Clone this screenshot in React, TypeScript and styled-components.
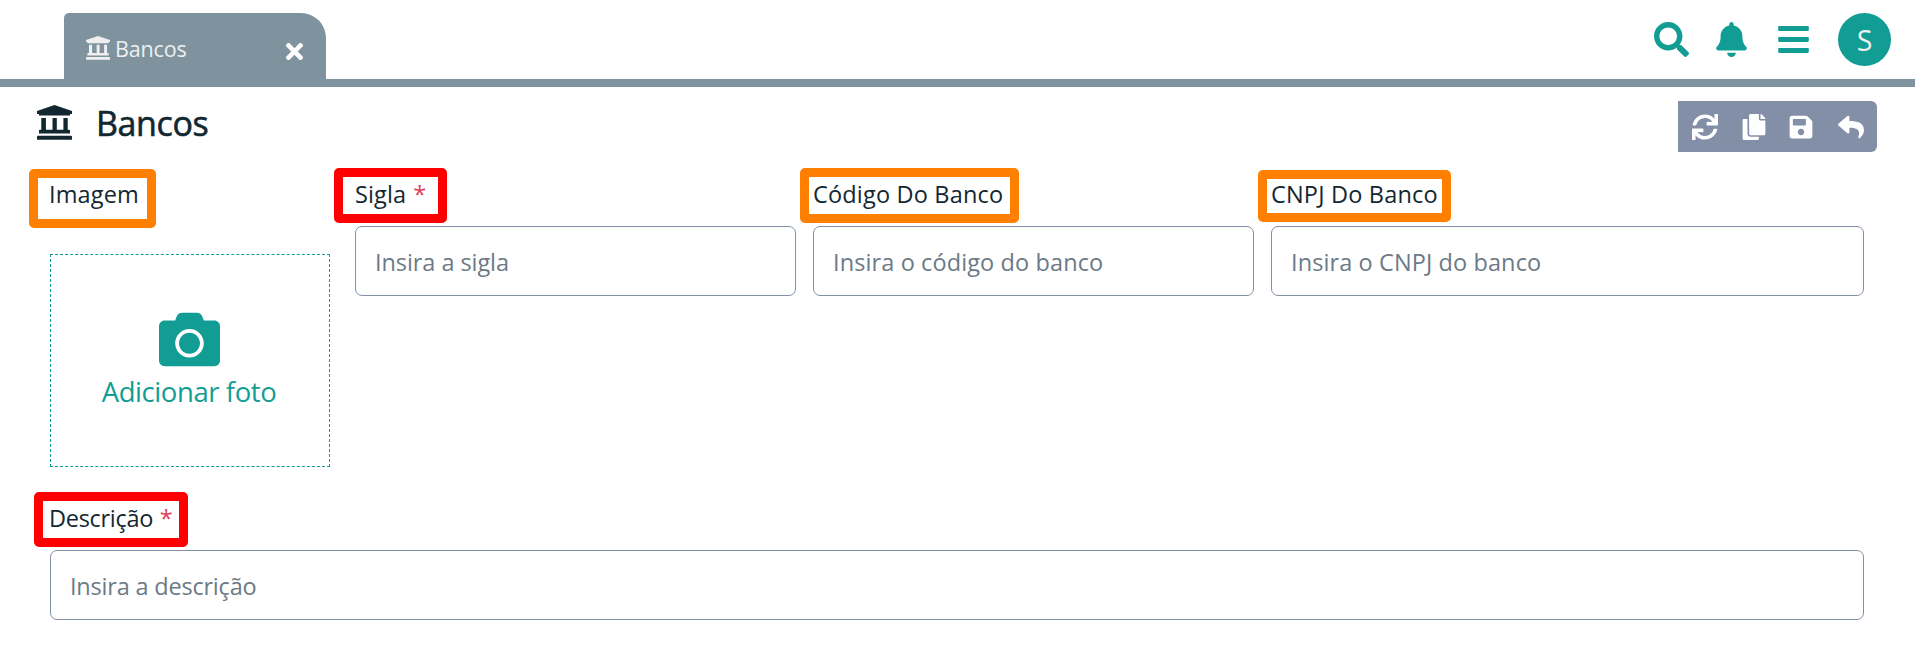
import React from "react";
import styled, { createGlobalStyle, css } from "styled-components";
import {
  FaBars,
  FaBell,
  FaCamera,
  FaCopy,
  FaReply,
  FaSave,
  FaSearch,
  FaSync,
  FaTimes,
} from "react-icons/fa";

const teal = "#129d94";
const slate = "#7e939e";
const ink = "#132731";
const border = "#838fa6";
const orange = "#ff8000";
const red = "#ff0000";

const GlobalStyle = createGlobalStyle`
  * { box-sizing: border-box; }
  body {
    margin: 0;
    background: #fff;
    color: ${ink};
    font-family: "Open Sans", "Noto Sans", sans-serif;
  }
`;

const Page = styled.div`
  display: flex;
  flex-direction: column;
  height: 669px;
  overflow: hidden;
  background: #fff;
`;

const Header = styled.header`
  display: flex;
  justify-content: space-between;
  height: 87px;
  padding: 13px 24px 0 64px;
  border-bottom: 8px solid ${slate};
`;

const Tab = styled.div`
  display: flex;
  align-items: center;
  width: 262px;
  height: 66px;
  padding: 4px 19px 0 22px;
  border-radius: 5px 25px 0 0;
  background: ${slate};
  color: #efefef;
`;

const TabLabel = styled.span`
  flex: 1;
  margin: 1px 0 0 5px;
  font-size: 21.5px;
  line-height: 30px;
  letter-spacing: -0.15px;
`;

const CloseButton = styled.button`
  display: flex;
  padding: 6px 0 0;
  border: 0;
  background: none;
  color: #fff;
`;

const HeaderActions = styled.div`
  display: flex;
  align-items: flex-start;
  color: ${teal};
`;

const HeaderIcon = styled.span<{ $gap: number }>`
  display: flex;
  margin: 9px ${(p) => p.$gap}px 0 0;
`;

const Avatar = styled.div`
  display: flex;
  align-items: center;
  justify-content: center;
  width: 53px;
  height: 53px;
  border-radius: 50%;
  background: ${teal};
  color: #efefef;
  font-size: 28.5px;
  line-height: 40px;
`;

const Main = styled.main`
  display: flex;
  flex-direction: column;
  padding: 14px 38px 0 37px;
`;

const TitleRow = styled.div`
  display: flex;
  align-items: flex-start;
  justify-content: space-between;
  height: 51px;
`;

const Title = styled.h1`
  display: flex;
  align-items: flex-start;
  gap: 24px;
  margin: 0;
  font-size: 34px;
  font-weight: 500;
  line-height: 44px;
  letter-spacing: -0.4px;
  -webkit-text-stroke: 0.6px ${ink};

  svg {
    margin-top: 4px;
  }
`;

const Toolbar = styled.div`
  display: flex;
  align-items: center;
  width: 199px;
  height: 51px;
  padding-left: 14px;
  border-radius: 0 6px 6px 0;
  background: ${border};
`;

const ToolButton = styled.button<{ $width: number }>`
  display: flex;
  flex: none;
  width: ${(p) => p.$width}px;
  padding: 0;
  border: 0;
  background: none;
  color: #fff;
`;

const Form = styled.form`
  display: grid;
  grid-template-columns: 288px 441px 441px 593px;
  column-gap: 17px;
  padding: 24px 0 0 13px;
`;

const Field = styled.div<{ $wide?: boolean }>`
  display: flex;
  flex-direction: column;
  align-items: flex-start;
  ${(p) =>
    p.$wide &&
    css`
      grid-column: 1 / -1;
      padding-top: 33px;
    `}
`;

const Label = styled.label<{ $spacing: number; $shift?: number }>`
  position: relative;
  margin-left: ${(p) => p.$shift ?? 0}px;
  font-size: 23.5px;
  line-height: 36px;
  letter-spacing: ${(p) => p.$spacing}px;
  white-space: pre;
`;

const Required = styled.span`
  margin-left: 1px;
  color: #e0405c;
`;

const Highlight = styled.span<{
  $color: string;
  $left: number;
  $top: number;
  $width: number;
  $height: number;
}>`
  position: absolute;
  left: ${(p) => p.$left}px;
  top: ${(p) => p.$top}px;
  width: ${(p) => p.$width}px;
  height: ${(p) => p.$height}px;
  border: 9px solid ${(p) => p.$color};
  border-radius: 5px;
  pointer-events: none;
`;

const Input = styled.input<{ $spacing: number }>`
  width: 100%;
  height: 70px;
  margin: 14px 0 0;
  padding: 1px 19px 0;
  border: 1px solid ${border};
  border-radius: 7px;
  outline: 0;
  background: #fff;
  color: ${ink};
  font-family: inherit;
  font-size: 23.5px;
  letter-spacing: ${(p) => p.$spacing}px;

  &::placeholder {
    color: #6c7a86;
    opacity: 1;
  }
`;

const PhotoBox = styled.div`
  display: flex;
  flex-direction: column;
  align-items: center;
  width: 280px;
  height: 213px;
  margin-top: 42px;
  padding: 54px 2px 0 0;
  border: 1px dashed ${teal};
  color: ${teal};
`;

const PhotoCaption = styled.span`
  margin-top: 2px;
  font-size: 27.5px;
  line-height: 40px;
  letter-spacing: -0.42px;
`;

function BankIcon({ size }: { size: number }) {
  return (
    <svg width={size} height={size} viewBox="0 0 106 106" fill="currentColor" stroke="none">
      <path d="M53 0 106 18V27H100V32H6V27H0V18Z" />
      <path d="M13 39H27V75H47V39H60V75H80V39H93V75H97Q100 75 100 78V86H6V78Q6 75 9 75H13Z" />
      <path d="M3 93H103Q106 93 106 96V105H0V96Q0 93 3 93Z" />
    </svg>
  );
}

export default function App() {
  return (
    <Page>
      <GlobalStyle />
      <Header>
        <Tab>
          <BankIcon size={24} />
          <TabLabel>Bancos</TabLabel>
          <CloseButton type="button" aria-label="Fechar">
            <FaTimes size={25} />
          </CloseButton>
        </Tab>
        <HeaderActions>
          <HeaderIcon $gap={25}>
            <FaSearch size={35} />
          </HeaderIcon>
          <HeaderIcon $gap={27}>
            <FaBell size={35} />
          </HeaderIcon>
          <HeaderIcon $gap={27}>
            <FaBars size={35} />
          </HeaderIcon>
          <Avatar>S</Avatar>
        </HeaderActions>
      </Header>
      <Main>
        <TitleRow>
          <Title>
            <BankIcon size={35} />
            Bancos
          </Title>
          <Toolbar>
            <ToolButton $width={49} type="button" aria-label="Atualizar">
              <FaSync size={26} />
            </ToolButton>
            <ToolButton $width={47} type="button" aria-label="Copiar">
              <FaCopy size={26} />
            </ToolButton>
            <ToolButton $width={50} type="button" aria-label="Salvar">
              <FaSave size={26} />
            </ToolButton>
            <ToolButton $width={26} type="button" aria-label="Voltar">
              <FaReply size={26} />
            </ToolButton>
          </Toolbar>
        </TitleRow>
        <Form>
          <Field>
            <Label $spacing={0.15} $shift={-1}>
              Imagem
              <Highlight $color={orange} $left={-20} $top={-7} $width={127} $height={59} />
            </Label>
            <PhotoBox>
              <FaCamera size={61} />
              <PhotoCaption>Adicionar foto</PhotoCaption>
            </PhotoBox>
          </Field>
          <Field>
            <Label $spacing={0.1}>
              Sigla <Required>*</Required>
              <Highlight $color={red} $left={-21} $top={-8} $width={113} $height={55} />
            </Label>
            <Input $spacing={-0.07} placeholder="Insira a sigla" />
          </Field>
          <Field>
            <Label $spacing={0.18}>
              Código Do Banco
              <Highlight $color={orange} $left={-13} $top={-8} $width={219} $height={55} />
            </Label>
            <Input $spacing={0.11} placeholder="Insira o código do banco" />
          </Field>
          <Field>
            <Label $spacing={0.18}>
              CNPJ Do Banco
              <Highlight $color={orange} $left={-13} $top={-6} $width={193} $height={52} />
            </Label>
            <Input $spacing={0.1} placeholder="Insira o CNPJ do banco" />
          </Field>
          <Field $wide>
            <Label $spacing={-0.3} $shift={-1}>
              Descrição <Required>*</Required>
              <Highlight $color={red} $left={-15} $top={-8} $width={154} $height={55} />
            </Label>
            <Input $spacing={-0.2} placeholder="Insira a descrição" />
          </Field>
        </Form>
      </Main>
    </Page>
  );
}
